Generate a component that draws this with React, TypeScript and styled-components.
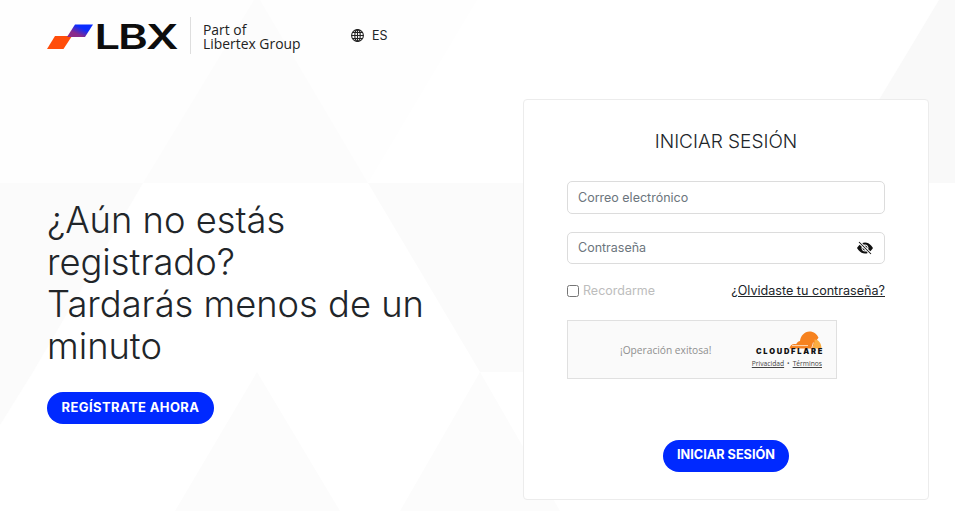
import React from 'react';
import styled, { createGlobalStyle } from 'styled-components';
import { BsEyeSlashFill } from 'react-icons/bs';

const Global = createGlobalStyle`
  html, body { margin: 0; padding: 0; background: #fff; }
  * { box-sizing: border-box; }
`;

const Page = styled.div`
  position: relative;
  width: 955px;
  height: 511px;
  overflow: hidden;
  background: #fff;
  font-family: Inter, "Liberation Sans", sans-serif;
  color: #212529;
`;

const Backdrop = styled.svg`
  position: absolute;
  inset: 0;
  width: 955px;
  height: 511px;
`;

const Layer = styled.div`
  position: relative;
`;

const Header = styled.header`
  display: flex;
  align-items: center;
  height: 71px;
  padding-left: 47px;
`;

const LogoMark = styled.svg`
  margin-top: 2px;
  overflow: visible;
`;

const Divider = styled.span`
  width: 1px;
  height: 37px;
  margin: 0 12px 0 6px;
  background: #dedede;
`;

const Tagline = styled.div`
  font-family: "Open Sans", Inter, sans-serif;
  font-size: 13.9px;
  line-height: 14px;
  font-weight: 500;
  color: #222;
  padding-top: 3px;
  width: 148px;
`;

const Lang = styled.div`
  display: flex;
  align-items: center;
  gap: 8px;
  font-size: 12.5px;
  color: #212529;
`;

const Main = styled.main`
  display: flex;
  justify-content: space-between;
  padding: 28px 26px 0 47px;
`;

const Promo = styled.section`
  width: 400px;
  padding-top: 100px;
`;

const Heading = styled.h2`
  margin: 0 0 25px;
  font-family: Inter, sans-serif;
  font-size: 36.3px;
  line-height: 42px;
  font-weight: 300;
  color: #212529;
`;

const PillButton = styled.button<{ $width: number; $wide?: boolean }>`
  display: block;
  width: ${p => p.$width}px;
  height: 32px;
  border: 0;
  border-radius: 16px;
  background: #0029ff;
  color: #fff;
  padding: 0 0 3px;
  font-family: Inter, sans-serif;
  font-weight: 700;
  font-size: ${p => (p.$wide ? '13px' : '12.7px')};
  letter-spacing: ${p => (p.$wide ? '0.4px' : '0')};
`;

const Card = styled.section`
  width: 406px;
  height: 401px;
  padding: 31px 43px 0;
  background: #fff;
  border: 1px solid #ececec;
  border-radius: 4px;
`;

const Title = styled.h1`
  margin: 0 0 28px;
  text-align: center;
  font-size: 19px;
  line-height: 22px;
  font-weight: 300;
  color: #212529;
`;

const Field = styled.div<{ $h: number; $gap: number; $lift?: boolean }>`
  display: flex;
  align-items: center;
  justify-content: space-between;
  height: ${p => p.$h}px;
  margin-bottom: ${p => p.$gap}px;
  padding: 0 11px ${p => (p.$lift ? '1px' : '0')} 10px;
  border: 1px solid #dcdcdc;
  border-radius: 5px;
  background: #fff;
  font-size: 12.5px;
  color: #6c757d;
`;

const OptionsRow = styled.div`
  display: flex;
  align-items: center;
  justify-content: space-between;
  height: 18px;
  margin-bottom: 21px;
  font-size: 12.5px;
`;

const Remember = styled.label`
  display: flex;
  align-items: center;
  gap: 4px;
  color: #bdbdbd;
`;

const Check = styled.span`
  width: 12px;
  height: 12px;
  margin-top: 2px;
  border: 1px solid #767676;
  border-radius: 2.5px;
  background: #fff;
`;

const Forgot = styled.a`
  font-size: 12.6px;
  color: #212529;
  text-decoration: underline;
`;

const Turnstile = styled.div`
  display: flex;
  align-items: center;
  justify-content: space-between;
  width: 270px;
  height: 59px;
  margin-bottom: 61px;
  padding: 0 14px 0 52px;
  background: #fafafa;
  border: 1px solid #e0e0e0;
`;

const Success = styled.span`
  font-family: "Open Sans", sans-serif;
  font-size: 10.2px;
  color: #8f8f8f;
`;

const Brand = styled.div`
  display: flex;
  flex-direction: column;
  align-items: flex-end;
  width: 72px;
`;

const BrandName = styled.span`
  font-family: Inter, sans-serif;
  font-size: 7.5px;
  line-height: 7px;
  font-weight: 900;
  letter-spacing: 1.75px;
  margin: -1px -2px 0 0;
  color: #111;
`;

const Legal = styled.div`
  display: flex;
  gap: 3px;
  margin-top: 4px;
  font-family: "Open Sans", sans-serif;
  font-size: 6.7px;
  line-height: 9px;
  color: #555;
`;

const LegalLink = styled.a`
  color: #444;
  text-decoration: underline;
`;

const CenterRow = styled.div`
  display: flex;
  justify-content: center;
`;

const Logo = () => (
  <LogoMark width="137" height="26" viewBox="0 0 137 26">
    <defs>
      <linearGradient id="lbxg" x1="0" y1="1" x2="1" y2="0">
        <stop offset="0.3" stopColor="#8a2a8a" />
        <stop offset="0.65" stopColor="#0a2cff" />
      </linearGradient>
    </defs>
    <polygon points="8,12 25,12 16.5,25 0,25" fill="#ff4d0a" />
    <polygon points="28,0.5 46,0.5 38,13 20,13" fill="url(#lbxg)" />
    <text x="47.5" y="25" textLength="82" lengthAdjust="spacingAndGlyphs" letterSpacing="-1.5" fontFamily="Inter, sans-serif" fontWeight="600" fontSize="34" fill="#0d0d0d">LBX</text>
  </LogoMark>
);

const Globe = () => (
  <svg width="13" height="13" viewBox="0 0 13 13" fill="none" stroke="#222" strokeWidth="1.1">
    <circle cx="6.5" cy="6.5" r="5.9" />
    <ellipse cx="6.5" cy="6.5" rx="2.7" ry="5.9" />
    <path d="M6.5 .6v11.8M.6 6.5h11.8M1.4 3.5h10.2M1.4 9.5h10.2" />
  </svg>
);

const Cloud = () => (
  <svg width="33" height="18" viewBox="0 0 33 18">
    <path d="M0.5 17.5C0.8 15 2.8 13 5.4 13c.6 0 1.2.1 1.7.3C8.4 10.6 10 10 11 10c.4-5 4.4-9.5 9.5-9.5 4.2 0 7.6 2.6 9 6.2L27 10l-3.5 7.5z" fill="#f6821f" />
    <path d="M25.5 8.5c3.8 0 7 3.4 7 9h-9l2-6.5c.1-.9 0-2-.1-2.5z" fill="#fbad41" />
    <path d="M3 14.6h16M22.6 17.5l1.8-6" stroke="#fff" strokeWidth="0.7" fill="none" />
  </svg>
);

export default function App() {
  return (
    <Page>
      <Global />
      <Backdrop viewBox="0 0 955 511" aria-hidden="true">
        <polygon points="0,0 477,0 368,183 0,183" fill="#fefefe" />
        <polygon points="257,-5 143,183 368,183" fill="#fcfcfc" />
        <polygon points="0,183 143,183 33,372 0,372" fill="#fbfbfb" />
        <polygon points="368,183 523,183 523,372 480,372" fill="#fbfbfb" />
        <polygon points="0,372 33,372 0,425" fill="#fbfbfb" />
        <polygon points="257,372 175,511 340,511" fill="#fcfcfc" />
        <polygon points="480,372 400,511 560,511" fill="#fcfcfc" />
        <polygon points="939,0 955,0 955,183 829,183" fill="#f9f9f9" />
      </Backdrop>
      <Layer>
        <Header>
          <Logo />
          <Divider />
          <Tagline>Part of<br />Libertex Group</Tagline>
          <Lang><Globe />ES</Lang>
        </Header>
        <Main>
          <Promo>
            <Heading>¿Aún no estás<br />registrado?<br />Tardarás menos de un<br />minuto</Heading>
            <PillButton $width={167} $wide>REGÍSTRATE AHORA</PillButton>
          </Promo>
          <Card>
            <Title>INICIAR SESIÓN</Title>
            <Field $h={33} $gap={18}>Correo electrónico</Field>
            <Field $h={32} $gap={17} $lift>Contraseña<BsEyeSlashFill size={16} color="#111" /></Field>
            <OptionsRow>
              <Remember><Check />Recordarme</Remember>
              <Forgot href="#">¿Olvidaste tu contraseña?</Forgot>
            </OptionsRow>
            <Turnstile>
              <Success>¡Operación exitosa!</Success>
              <Brand>
                <Cloud />
                <BrandName>CLOUDFLARE</BrandName>
                <Legal><LegalLink href="#">Privacidad</LegalLink>•<LegalLink href="#">Términos</LegalLink></Legal>
              </Brand>
            </Turnstile>
            <CenterRow><PillButton $width={126}>INICIAR SESIÓN</PillButton></CenterRow>
          </Card>
        </Main>
      </Layer>
    </Page>
  );
}
